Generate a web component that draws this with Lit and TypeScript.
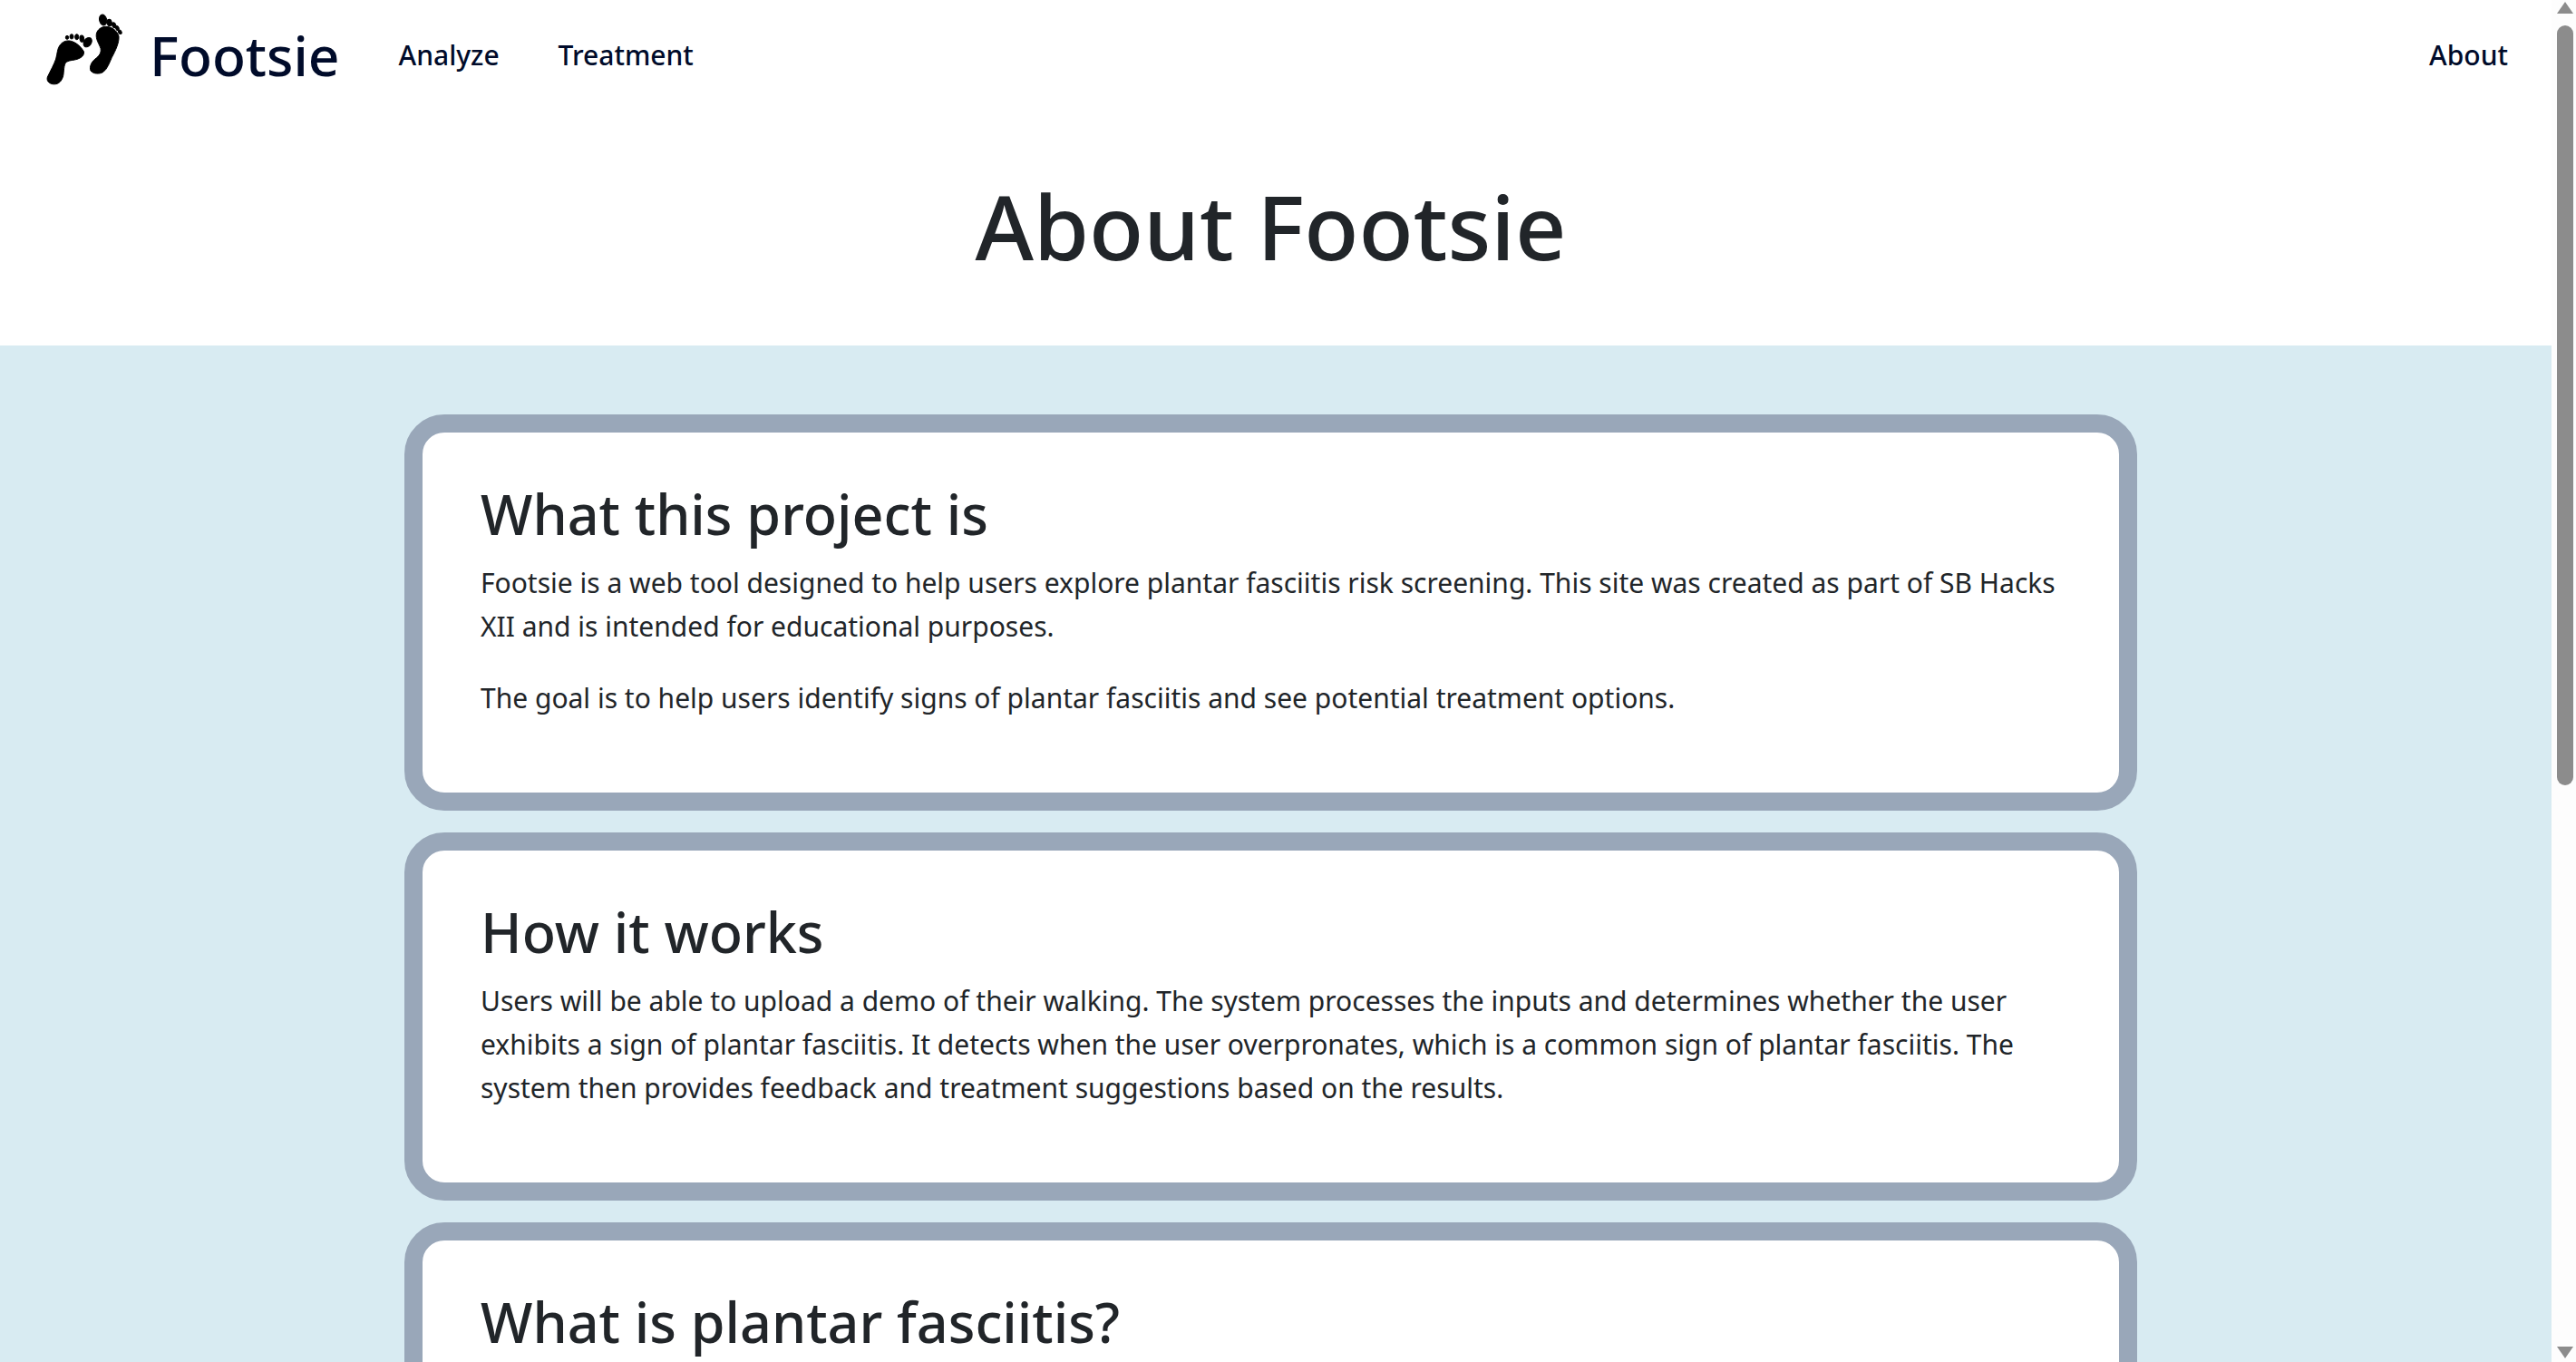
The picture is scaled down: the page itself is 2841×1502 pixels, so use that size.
import { LitElement, css, html } from "lit";
import { customElement } from "lit/decorators.js";

@customElement("app-root")
export class AppRoot extends LitElement {
  public static styles = css`
    :host {
      display: flex;
      height: 1502px;
      overflow: hidden;
      background: #fff;
      font-family: "Noto Sans", "Open Sans", sans-serif;
      color: #212529;
    }

    .page {
      flex: 1;
      min-width: 0;
      overflow: hidden;
    }

    .navbar {
      display: flex;
      align-items: center;
      height: 120px;
      padding: 0 48px 0 30px;
    }

    .logo {
      display: block;
      width: 120px;
      height: 100px;
      margin-right: 15px;
      margin-bottom: 20px;
    }

    .brand {
      font-size: 60.5px;
      font-weight: 500;
      color: #000b2a;
      margin-right: 65px;
    }

    .nav-link {
      font-size: 30px;
      font-weight: 500;
      color: #000b2a;
      margin-right: 65px;
    }

    .nav-link.right {
      margin-left: auto;
      margin-right: 0;
    }

    .page-title {
      margin: 0;
      height: 261px;
      padding: 70px 11px 0 0;
      box-sizing: border-box;
      text-align: center;
      font-size: 98.5px;
      font-weight: 500;
      line-height: 1.2;
    }

    .content {
      background: #d8ebf2;
      padding: 76px 11px 0 0;
      display: flex;
      flex-direction: column;
      align-items: center;
      gap: 24px;
    }

    .card {
      box-sizing: border-box;
      width: 1911px;
      background: #fff;
      border: 20px solid #99a7b9;
      border-radius: 44px;
      padding: 53px 64px 49px;
    }

    .card h2 {
      margin: 0 0 16px;
      font-size: 61px;
      font-weight: 500;
      line-height: 73px;
    }

    .card p {
      margin: 0 0 31px;
      font-size: 30px;
      line-height: 48px;
    }

    .scrollbar {
      flex: none;
      width: 27px;
      box-sizing: border-box;
      padding: 0 3px 0 6px;
      background: #fdfdfd;
      display: flex;
      flex-direction: column;
      align-items: stretch;
    }

    .arrow {
      flex: none;
      width: 0;
      height: 0;
      border-left: 9px solid transparent;
      border-right: 9px solid transparent;
    }

    .arrow.up {
      margin-top: 2px;
      border-bottom: 13px solid #8c8c8c;
    }

    .arrow.down {
      margin-top: auto;
      margin-bottom: 4px;
      border-top: 13px solid #8c8c8c;
    }

    .thumb {
      flex: none;
      height: 838px;
      margin-top: 13px;
      background: #8c8c8c;
      border-radius: 9px;
    }
  `;

  public render() {
    return html`
      <div class="page">
        <nav class="navbar">
          <svg class="logo" viewBox="0 0 360 300" fill="#000" stroke="#000" stroke-width="3">
            <path
              d="M67 255 C78 232 88 215 95 195 C100 175 100 160 108 150 C116 138 128 134 140 135 C156 137 175 150 187 170 C190 182 180 190 170 194 C158 200 140 198 130 205 C122 212 122 225 120 245 C118 262 108 276 95 278 C80 281 62 272 67 255 Z"
            />
            <ellipse cx="200" cy="140" rx="12" ry="17" transform="rotate(35 200 140)" />
            <ellipse cx="181" cy="128" rx="7" ry="11" transform="rotate(-10 181 128)" />
            <ellipse cx="164" cy="122" rx="6" ry="9" />
            <ellipse cx="147" cy="121" rx="6" ry="8" />
            <ellipse cx="132" cy="124" rx="5" ry="6" />
            <path
              d="M229 112 C232 98 245 88 260 88 C280 88 298 102 303 120 C305 140 292 168 280 190 C272 208 265 228 252 238 C240 246 218 245 210 234 C205 222 212 205 225 195 C238 185 246 175 243 160 C238 145 226 130 229 112 Z"
            />
            <ellipse cx="251" cy="66" rx="12" ry="18" transform="rotate(-15 251 66)" />
            <ellipse cx="272" cy="75" rx="8" ry="11" transform="rotate(-15 272 75)" />
            <ellipse cx="287" cy="83" rx="6" ry="9" transform="rotate(-20 287 83)" />
            <ellipse cx="298" cy="93" rx="5" ry="8" transform="rotate(-25 298 93)" />
            <ellipse cx="307" cy="106" rx="5" ry="7" transform="rotate(-30 307 106)" />
          </svg>
          <span class="brand">Footsie</span>
          <span class="nav-link">Analyze</span>
          <span class="nav-link">Treatment</span>
          <span class="nav-link right">About</span>
        </nav>

        <h1 class="page-title">About Footsie</h1>

        <section class="content">
          <article class="card">
            <h2>What this project is</h2>
            <p>
              Footsie is a web tool designed to help users explore plantar
              fasciitis risk screening. This site was created as part of SB Hacks
              XII and is intended for educational purposes.
            </p>
            <p>
              The goal is to help users identify signs of plantar fasciitis and
              see potential treatment options.
            </p>
          </article>
          <article class="card">
            <h2>How it works</h2>
            <p>
              Users will be able to upload a demo of their walking. The system
              processes the inputs and determines whether the user exhibits a
              sign of plantar fasciitis. It detects when the user overpronates,
              which is a common sign of plantar fasciitis. The system then
              provides feedback and treatment suggestions based on the results.
            </p>
          </article>
          <article class="card">
            <h2>What is plantar fasciitis?</h2>
          </article>
        </section>
      </div>
      <div class="scrollbar">
        <div class="arrow up"></div>
        <div class="thumb"></div>
        <div class="arrow down"></div>
      </div>
    `;
  }
}
